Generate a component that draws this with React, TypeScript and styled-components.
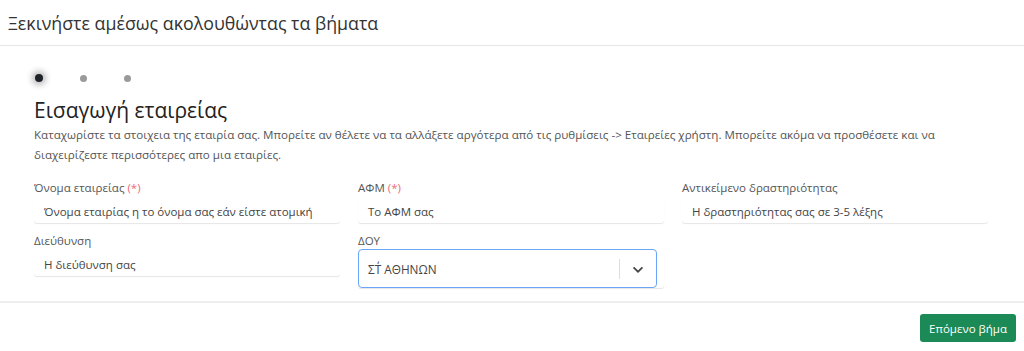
import React from 'react';
import styled, { createGlobalStyle } from 'styled-components';

const GlobalStyle = createGlobalStyle`
    body {
        margin: 0;
        background: #fff;
        font-family: "Open Sans", "Noto Sans", sans-serif;
        color: #333;
    }
`;

const Page = styled.div`
    width: 1024px;
    height: 351px;
    display: flex;
    flex-direction: column;
    overflow: hidden;
`;

const Header = styled.div`
    height: 46px;
    display: flex;
    align-items: center;
    padding-left: 8px;
    border-bottom: 1px solid #e6e6e6;
    font-size: 17.8px;
    color: #333;
    box-sizing: border-box;
`;

const Body = styled.div`
    padding: 0 35px 0 34px;
    height: 255px;
    box-sizing: border-box;
`;

const Steps = styled.div`
    display: flex;
    align-items: center;
    gap: 37px;
    height: 30px;
    margin-top: 17px;
    padding-left: 1px;
`;

const Dot = styled.span<{ $active?: boolean }>`
    width: ${p => p.$active ? 8 : 7}px;
    height: ${p => p.$active ? 8 : 7}px;
    border-radius: 50%;
    background: ${p => p.$active ? '#1f2329' : '#9a9a9a'};
    box-shadow: ${p => p.$active ? '0 0 6px 3px rgba(0,0,0,0.28)' : 'none'};
`;

const Title = styled.h2`
    margin: 3px 0 0;
    font-size: 21px;
    font-weight: 400;
    color: #222;
    line-height: 28px;
`;

const Description = styled.p`
    margin: 1px 0 0;
    font-size: 11.6px;
    line-height: 20px;
    color: #555;
    max-width: 940px;
`;

const Grid = styled.div`
    display: grid;
    grid-template-columns: repeat(3, 306px);
    column-gap: 18px;
    row-gap: 10px;
    margin-top: 15px;
`;

const Field = styled.div`
    display: flex;
    flex-direction: column;
`;

const Label = styled.label`
    font-size: 11.5px;
    line-height: 16px;
    color: #555;
`;

const Required = styled.span`
    color: #ef6b7a;
`;

const Input = styled.div`
    height: 24px;
    margin-top: 3px;
    padding-left: 10px;
    display: flex;
    align-items: center;
    font-size: 11.5px;
    color: #444;
    border-radius: 3px;
    box-shadow: 0 1px 1px rgba(0,0,0,0.1);
`;

const SelectWrap = styled.div`
    border-radius: 3px;
    box-shadow: 0 1px 1px rgba(0,0,0,0.1);
`;

const SelectBox = styled.div`
    width: 299px;
    height: 39px;
    box-sizing: border-box;
    border: 1px solid #6aa6f8;
    border-radius: 4px;
    display: flex;
    align-items: center;
    background: #fff;
`;

const SelectValue = styled.div`
    flex: 1;
    padding-left: 9px;
    font-size: 11.8px;
    color: #444;
`;

const Separator = styled.span`
    width: 1px;
    height: 20px;
    background: #ddd;
`;

const Chevron = styled.span`
    width: 36px;
    display: flex;
    justify-content: center;
    color: #444;
`;

const Footer = styled.div`
    border-top: 2px solid #eee;
    display: flex;
    justify-content: flex-end;
    padding: 11px 8px 0 0;
`;

const Button = styled.button`
    height: 28px;
    padding: 0 9px;
    border: none;
    border-radius: 3px;
    background: #1c8a56;
    color: #fff;
    font-family: "Open Sans", "Noto Sans", sans-serif;
    font-size: 11.5px;
`;

export default function App() {
    return (<>
        <GlobalStyle />
        <Page>
            <Header>Ξεκινήστε αμέσως ακολουθώντας τα βήματα</Header>
            <Body>
                <Steps>
                    <Dot $active />
                    <Dot />
                    <Dot />
                </Steps>
                <Title>Εισαγωγή εταιρείας</Title>
                <Description>
                    Καταχωρίστε τα στοιχεια της εταιρία σας. Μπορείτε αν θέλετε να τα αλλάξετε αργότερα από τις ρυθμίσεις -&gt; Εταιρείες χρήστη. Μπορείτε ακόμα να προσθέσετε και να διαχειρίζεστε περισσότερες απο μια εταιρίες.
                </Description>
                <Grid>
                    <Field>
                        <Label>Όνομα εταιρείας <Required>(*)</Required></Label>
                        <Input>Όνομα εταιρίας η το όνομα σας εάν είστε ατομική</Input>
                    </Field>
                    <Field>
                        <Label>ΑΦΜ <Required>(*)</Required></Label>
                        <Input>Το ΑΦΜ σας</Input>
                    </Field>
                    <Field>
                        <Label>Αντικείμενο δραστηριότητας</Label>
                        <Input>Η δραστηριότητας σας σε 3-5 λέξης</Input>
                    </Field>
                    <Field>
                        <Label>Διεύθυνση</Label>
                        <Input>Η διεύθυνση σας</Input>
                    </Field>
                    <Field>
                        <Label>ΔΟΥ</Label>
                        <SelectWrap>
                            <SelectBox>
                                <SelectValue>ΣΤ΄ ΑΘΗΝΩΝ</SelectValue>
                                <Separator />
                                <Chevron>
                                    <svg width="14" height="14" viewBox="0 0 20 20" fill="currentColor">
                                        <path d="M4.5 6.8 10 12.3l5.5-5.5 1.7 1.7L10 15.7 2.8 8.5z" />
                                    </svg>
                                </Chevron>
                            </SelectBox>
                        </SelectWrap>
                    </Field>
                </Grid>
            </Body>
            <Footer>
                <Button>Επόμενο βήμα</Button>
            </Footer>
        </Page>
    </>);
}
